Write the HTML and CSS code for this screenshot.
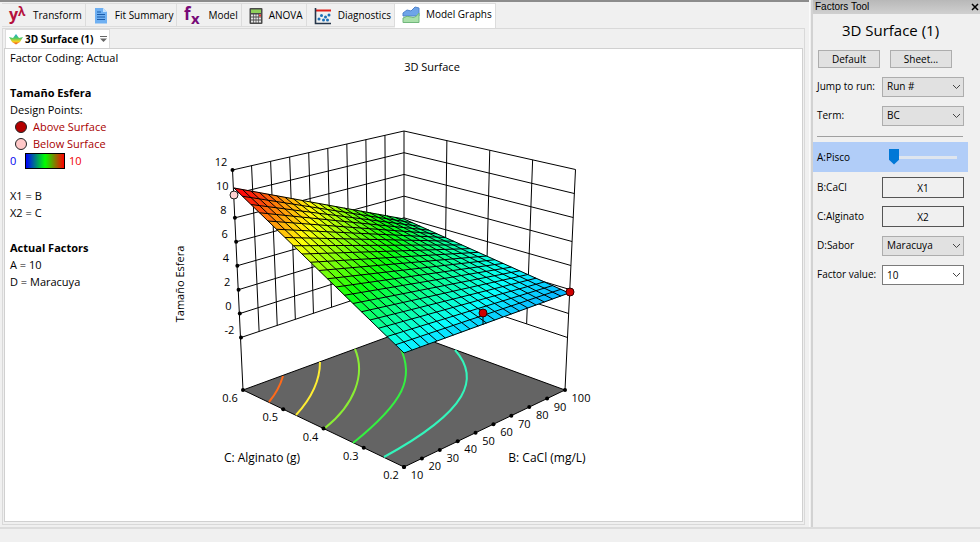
FILE: index.html
```html
<!DOCTYPE html>
<html lang="en">
<head>
    <meta charset="UTF-8">
    <meta name="viewport" content="width=device-width, initial-scale=1.0">
    <title>Model Graphs - 3D Surface</title>
    <link rel="stylesheet" href="styles.css">
</head>
<body>
    <div class="workspace">
        <main class="main">
            <!-- Analysis steps -->
            <nav class="tabs">
                <button type="button" class="tab">
                    <svg class="tab-icon icon-transform" width="18" height="18" viewBox="0 0 18 18" aria-hidden="true">
                        <text x="0" y="13" font-size="16">y</text>
                        <text x="9" y="9" font-size="12">λ</text>
                    </svg>
                    Transform
                </button>
                <button type="button" class="tab">
                    <svg class="tab-icon" width="16" height="18" viewBox="0 0 16 18">
                        <path d="M2 1h8l4 4v11.500H2z" fill="#6fb0f2"/>
                        <path d="M10 1v4h4z" fill="#c4e2ff"/>
                        <path d="M4 5h4M4 7.500h8M4 10h8M4 12.500h8" stroke="#1b5cab" stroke-width="1.200"/>
                    </svg>
                    Fit Summary
                </button>
                <button type="button" class="tab">
                    <svg class="tab-icon icon-model" width="18" height="20" viewBox="0 0 18 20" aria-hidden="true">
                        <text x="0" y="14" font-size="17">f</text>
                        <text x="7" y="18" font-size="15">x</text>
                    </svg>
                    Model
                </button>
                <button type="button" class="tab">
                    <svg class="tab-icon" width="14" height="18" viewBox="0 0 14 18">
                        <rect x=".5" y="1" width="13" height="16" rx="1" fill="#4a4a4a"/>
                        <rect x="2" y="2.500" width="10" height="3.500" fill="#8fd15a"/>
                        <path d="M2 8.500h10M2 11.500h10M2 14.500h10" stroke="#e6e6e6" stroke-width="2" stroke-dasharray="2 .67"/>
                        <rect x="10" y="7.500" width="2" height="2" fill="#e5392e"/>
                    </svg>
                    ANOVA
                </button>
                <button type="button" class="tab">
                    <svg class="tab-icon" width="18" height="18" viewBox="0 0 18 18">
                        <path d="M2 3.500h15" stroke="#e0201b" stroke-width="2"/>
                        <path d="M1.500 1v15.500H17" fill="none" stroke="#26364a" stroke-width="1.600"/>
                        <g fill="#1c70b8">
                            <circle cx="5" cy="12" r="1.500"/><circle cx="7.500" cy="8.500" r="1.500"/>
                            <circle cx="9.500" cy="13" r="1.500"/><circle cx="11.500" cy="10" r="1.500"/>
                            <circle cx="13.500" cy="13" r="1.500"/><circle cx="15" cy="8" r="1.500"/>
                        </g>
                    </svg>
                    Diagnostics
                </button>
                <button type="button" class="tab tab-active">
                    <svg class="tab-icon" width="18" height="18" viewBox="0 0 18 18">
                        <path d="M1 7l4-3 4 1 4-4 4 1v8H1z" fill="#6ea4e8" stroke="#4f83cc"/>
                        <path d="M1 12q4-3 8-1t8-4v9.500H1z" fill="#a9dfa9" stroke="#71b77c"/>
                    </svg>
                    Model Graphs
                </button>
            </nav>

            <div class="view">
                <div class="view-tabs">
                    <button type="button" class="view-tab">
                        <svg width="14" height="12" viewBox="0 0 14 12">
                            <defs>
                                <linearGradient id="bowl" x1="0" y1="0" x2="0" y2="1">
                                    <stop offset="0" stop-color="#1aa9d8"/>
                                    <stop offset=".4" stop-color="#4fca62"/>
                                    <stop offset=".7" stop-color="#f5d31e"/>
                                    <stop offset="1" stop-color="#ef4423"/>
                                </linearGradient>
                            </defs>
                            <path d="M0 4l4 1 3-4 3 4 4-1-3 5-4 2.500L3 9z" fill="url(#bowl)"/>
                        </svg>
                        3D Surface (1)
                        <svg class="view-menu" width="7" height="6" viewBox="0 0 7 6">
                            <path d="M0 .5h7" stroke="#666"/>
                            <path d="M0 2.500h7L3.500 6z" fill="#666"/>
                        </svg>
                    </button>
                </div>

                <section class="graph">
                    <div class="legend">
                        <p>Factor Coding: Actual</p>
                        <h2>Tamaño Esfera</h2>
                        <p>Design Points:</p>
                        <p class="point"><span class="dot dot-above"></span>Above Surface</p>
                        <p class="point"><span class="dot dot-below"></span>Below Surface</p>
                        <p class="scale">
                            <span class="scale-min">0</span>
                            <span class="scale-bar"></span>
                            <span class="scale-max">10</span>
                        </p>
                        <p class="axes-first">X1 = B</p>
                        <p>X2 = C</p>
                        <h2>Actual Factors</h2>
                        <p>A = 10</p>
                        <p>D = Maracuya</p>
                    </div>

                    <svg class="chart" viewBox="160 49 642 472" role="img" aria-label="3D Surface">
                        <g id="walls" class="wall"></g>
                        <path class="floor" d="M404 331L565 390L404 467L243 390z"/>
                        <g class="contours">
                            <path stroke="#ff6a1a" d="M283 376Q279 390 269 402"/>
                            <path stroke="#ffee33" d="M320 362Q320 389 296 415"/>
                            <path stroke="#8aee33" d="M355 349C366 375 354 405 325 428"/>
                            <path stroke="#33f040" d="M400 347C415 378 404 402 353 443"/>
                            <path stroke="#33f5bb" d="M455 350C480 378 470 410 384 457"/>
                        </g>
                        <g id="surface"></g>
                        <g id="mesh" class="wall"></g>
                        <g id="ticks"></g>
                        <path class="stem" d="M483 314v11"/>
                        <circle class="above" cx="483" cy="313" r="4"/>
                        <circle class="above" cx="570" cy="292" r="4"/>
                        <circle class="below" cx="234" cy="195" r="4"/>
                        <g class="labels" id="labels">
                            <text x="432" y="71">3D Surface</text>
                            <text class="floor-title" x="262" y="462">C: Alginato (g)</text>
                            <text class="floor-title" x="547" y="462">B: CaCl (mg/L)</text>
                            <text transform="translate(184 284) rotate(-90)">Tamaño Esfera</text>
                        </g>
                    </svg>
                </section>
            </div>
        </main>

        <!-- Factors Tool -->
        <aside class="tool">
            <header class="tool-bar">
                <span>Factors Tool</span>
                <button type="button" class="close" aria-label="Close">
                    <svg width="8" height="8" viewBox="0 0 8 8"><path d="M1 1l6 6M7 1L1 7" stroke="#000" stroke-width="1.500"/></svg>
                </button>
            </header>
            <h1 class="tool-title">3D Surface (1)</h1>
            <div class="tool-buttons">
                <button type="button">Default</button>
                <button type="button">Sheet...</button>
            </div>
            <div class="row">
                <label for="run">Jump to run:</label>
                <div class="combo">
                    <select id="run"><option>Run #</option></select>
                    <svg class="arrow" width="9" height="6" viewBox="0 0 9 6"><path d="M1 1l3.500 3.500L8 1"/></svg>
                </div>
            </div>
            <div class="row">
                <label for="term">Term:</label>
                <div class="combo">
                    <select id="term"><option>BC</option></select>
                    <svg class="arrow" width="9" height="6" viewBox="0 0 9 6"><path d="M1 1l3.500 3.500L8 1"/></svg>
                </div>
            </div>
            <hr class="divider">
            <div class="row row-selected">
                <label for="pisco">A:Pisco</label>
                <input type="range" id="pisco" class="slider" min="10" max="30" value="10">
            </div>
            <div class="row">
                <label for="cacl">B:CaCl</label>
                <button type="button" id="cacl" class="axis">X1</button>
            </div>
            <div class="row">
                <label for="alginato">C:Alginato</label>
                <button type="button" id="alginato" class="axis">X2</button>
            </div>
            <div class="row">
                <label for="sabor">D:Sabor</label>
                <div class="combo">
                    <select id="sabor"><option>Maracuya</option></select>
                    <svg class="arrow" width="9" height="6" viewBox="0 0 9 6"><path d="M1 1l3.500 3.500L8 1"/></svg>
                </div>
            </div>
            <div class="row">
                <label for="value">Factor value:</label>
                <div class="combo">
                    <input type="text" id="value" value="10">
                    <svg class="arrow" width="9" height="6" viewBox="0 0 9 6"><path d="M1 1l3.500 3.500L8 1"/></svg>
                </div>
            </div>
        </aside>
    </div>
    <footer class="status"></footer>

    <script src="script.js"></script>
</body>
</html>
```
FILE: styles.css
```css
/* Global Styles */
* {
    box-sizing: border-box;
}

body {
    margin: 0;
    min-height: 100vh;
    display: flex;
    flex-direction: column;
    background-color: #f0f0f0;
    color: #000;
    font-family: 'Open Sans', 'Noto Sans', sans-serif;
    font-size: 10px;
    line-height: 17px;
}

button, select, input {
    font: inherit;
    color: inherit;
    margin: 0;
}

h1, h2, p {
    margin: 0;
}

svg {
    display: block;
    flex: none;
}

.workspace {
    flex: 1;
    display: flex;
}

.main {
    flex: 1;
    min-width: 0;
    display: flex;
    flex-direction: column;
    border-top: 2px solid #8c8c8c;
    padding: 1px 4px 2px 2px;
}

/* Analysis tabs */
.tabs {
    display: flex;
    height: 25px;
}

.tab {
    display: flex;
    align-items: center;
    gap: 6px;
    height: 24px;
    padding: 1px 3px 0 7px;
    border: 1px solid #dcdcdc;
    border-left: none;
    background-color: #f0f0f0;
    white-space: nowrap;
}

.tab-icon {
    overflow: visible;
}

.tab-active {
    height: 25px;
    background-color: #fff;
    border-bottom: none;
    padding-top: 0;
    padding-bottom: 3px;
}

.icon-transform {
    fill: #b5103c;
    font-weight: bold;
}

.icon-model {
    fill: #780a78;
    font-weight: bold;
}

.view {
    flex: 1;
    display: flex;
    flex-direction: column;
    border: 1px solid #d9d9d9;
    padding: 0 1px 2px 1px;
}

.view-tabs {
    display: flex;
    height: 19px;
    padding-left: 1px;
}

.view-tab {
    display: flex;
    align-items: center;
    gap: 2px;
    border: 1px solid #dcdcdc;
    border-bottom: none;
    background-color: #fff;
    padding: 0 2px 0 3px;
    font-weight: bold;
    white-space: nowrap;
}

.view-menu {
    margin-left: 5px;
}

.graph {
    flex: 1;
    display: flex;
    background-color: #fff;
    border: 1px solid #d0d0d0;
}

/* Legend */
.legend {
    flex: none;
    width: 155px;
    padding-left: 5px;
    font-size: 11px;
}

.legend h2 {
    margin-top: 18px;
    font-size: 11px;
    line-height: 17px;
}

.point {
    display: flex;
    align-items: center;
    gap: 6px;
    padding-left: 5px;
    color: #a80000;
}

.dot {
    width: 12px;
    height: 12px;
    border: 1px solid #222;
    border-radius: 50%;
}

.dot-above {
    background-color: #b40000;
}

.dot-below {
    background-color: #ffc8c8;
}

.scale {
    display: flex;
    align-items: center;
}

.scale-min {
    width: 15px;
    color: #0000f0;
}

.scale-bar {
    width: 40px;
    height: 16px;
    margin-right: 4px;
    border: 1px solid #000;
    background-image: linear-gradient(to right, #0000ff, #00ff00 50%, #ff0000);
}

.scale-max {
    color: #f00000;
}

.axes-first {
    margin-top: 18px;
}

/* 3D chart */
.chart {
    flex: 1;
    min-width: 0;
    height: auto;
    align-self: flex-start;
}

.wall {
    fill: none;
    stroke: #000;
    stroke-width: 1;
}

.floor {
    fill: #646464;
    stroke: #000;
}

.contours {
    fill: none;
    stroke-width: 2;
}

.stem {
    stroke: #000;
}

.above {
    fill: #d00000;
    stroke: #300;
}

.below {
    fill: #ffd0d0;
    stroke: #222;
}

.labels {
    font-size: 11px;
    text-anchor: middle;
}

.floor-title {
    font-size: 12px;
}

/* Factors Tool */
.tool {
    flex: none;
    width: 171px;
    border-left: 1px solid #fafafa;
    box-shadow: inset 1px 0 #f0f0f0, inset 3px 0 #d2d2d2;
    padding-left: 3px;
}

.tool-bar {
    display: flex;
    justify-content: space-between;
    align-items: center;
    height: 14px;
    padding: 0 1px 1px 2px;
    background-image: linear-gradient(#b8b8b8, #d0d0d0);
    font-family: 'Liberation Sans', Arial, sans-serif;
    line-height: 12px;
}

.close {
    display: flex;
    border: none;
    padding: 0;
    background: none;
}

.tool-title {
    margin-top: 4px;
    padding-right: 12px;
    text-align: center;
    font-size: 15px;
    font-weight: normal;
    line-height: 24px;
}

.tool-buttons {
    display: flex;
    gap: 10px;
    padding: 8px 4px 4px 5px;
}

.tool-buttons button {
    width: 62px;
    height: 18px;
    padding: 0;
    border: 1px solid #adadad;
    background-color: #e1e1e1;
    line-height: 16px;
}

.row {
    display: flex;
    align-items: center;
    height: 29px;
    margin-right: 12px;
    padding: 0 4px;
}

.row label {
    flex: none;
    width: 65px;
    white-space: nowrap;
}

.combo {
    position: relative;
    width: 82px;
    height: 20px;
}

.combo select,
.combo input {
    appearance: none;
    display: block;
    width: 100%;
    height: 20px;
    padding: 0 4px;
    border: 1px solid #adadad;
    border-radius: 0;
    background-color: #e1e1e1;
}

.combo input {
    border-color: #7a7a7a;
    background-color: #fff;
}

.arrow {
    position: absolute;
    right: 3px;
    top: 7px;
    fill: none;
    stroke: #444;
    pointer-events: none;
}

.divider {
    margin: 6px 17px 5px 4px;
    border: none;
    border-top: 1px solid #a0a0a0;
}

.row-selected {
    height: 30px;
    margin-bottom: 1px;
    background-color: #b1cdf8;
}

.slider {
    appearance: none;
    width: 68px;
    height: 16px;
    margin-left: 7px;
    background: none;
}

.slider::-webkit-slider-runnable-track {
    height: 3px;
    background-color: #dfe5ee;
}

.slider::-webkit-slider-thumb {
    appearance: none;
    width: 10px;
    height: 16px;
    margin-top: -7px;
    background-color: #0078d7;
    clip-path: polygon(0 0, 100% 0, 100% 70%, 50% 100%, 0 70%);
}

.axis {
    width: 82px;
    height: 21px;
    padding: 0;
    border: 1px solid #555;
    background-color: #f0f0f0;
    line-height: 18px;
}

.status {
    height: 15px;
    border-top: 2px solid #dcdcdc;
}
```
FILE: script.js
```js
const SVG = 'http://www.w3.org/2000/svg';

// Corners of the walls: top edge (12) and bottom edge (-2)
const top12 = { left: [232.5, 170], back: [404, 131], right: [575.5, 169.5] };
const low = { left: [241, 337.5], back: [404, 283], right: [567.5, 337.5] };

// Corners of the fitted surface: position and response
const corners = {
    left: [234, 188, 10.5],
    back: [404, 219, 3.9],
    right: [569, 293, 1.7],
    front: [404, 353, 2.2]
};

function mix(a, b, t) {
    return a.map((n, i) => n + (b[i] - n) * t);
}

function add(parent, name, attrs, text) {
    const el = document.createElementNS(SVG, name);
    for (const key in attrs) el.setAttribute(key, attrs[key]);
    if (text !== undefined) el.textContent = text;
    parent.appendChild(el);
}

function line(parent, a, b) {
    add(parent, 'path', { d: `M${a[0]} ${a[1]}L${b[0]} ${b[1]}` });
}

function drawWalls() {
    const walls = document.getElementById('walls');
    for (let i = 0; i <= 7; i++) {
        const back = mix(top12.back, low.back, i / 7);
        line(walls, mix(top12.left, low.left, i / 7), back);
        line(walls, back, mix(top12.right, low.right, i / 7));
    }
    for (let i = 1; i <= 9; i++) {
        line(walls, mix(top12.left, top12.back, i / 9), mix(low.left, low.back, i / 9));
    }
    for (let i = 1; i < 4; i++) {
        line(walls, mix(top12.back, top12.right, i / 4), mix(low.back, low.right, i / 4));
    }
    line(walls, top12.left, [243, 390]);
    line(walls, top12.right, [565, 390]);
}

function surfacePoint(b, c) {
    return mix(mix(corners.front, corners.right, b), mix(corners.left, corners.back, b), c);
}

function drawSurface() {
    const surface = document.getElementById('surface');
    const mesh = document.getElementById('mesh');
    const n = 20;
    for (let i = n - 1; i >= 0; i--) {
        for (let j = n - 1; j >= 0; j--) {
            const quad = [[i, j], [i + 1, j], [i + 1, j + 1], [i, j + 1]]
                .map(([b, c]) => surfacePoint(b / n, c / n).slice(0, 2).join(','));
            const value = surfacePoint((i + 0.5) / n, (j + 0.5) / n)[2];
            const hue = Math.max(0, 240 - 24 * value);
            const fill = `hsl(${hue}, 100%, 52%)`;
            add(surface, 'polygon', { points: quad.join(' '), fill: fill, stroke: fill, 'stroke-width': 0.5 });
        }
    }
    for (let i = 0; i <= n; i++) {
        line(mesh, surfacePoint(i / n, 0), surfacePoint(i / n, 1));
        line(mesh, surfacePoint(0, i / n), surfacePoint(1, i / n));
    }
}

function drawAxes() {
    const ticks = document.getElementById('ticks');
    const labels = document.getElementById('labels');
    const mark = (p) => add(ticks, 'circle', { cx: p[0], cy: p[1], r: 2 });

    ['12', '10', '8', '6', '4', '2', '0', '-2'].forEach((text, i) => {
        const p = mix(top12.left, low.left, i / 7);
        if (i !== 1) mark(p);
        add(labels, 'text', { x: p[0] - 11.5, y: p[1] - 4 }, text);
    });
    ['0.2', '0.3', '0.4', '0.5', '0.6'].forEach((text, i) => {
        const p = mix([404, 467], [243, 390], i / 4);
        mark(p);
        add(labels, 'text', { x: p[0] - 13, y: p[1] + 12 }, text);
    });
    for (let i = 0; i <= 9; i++) {
        const p = mix([404, 467], [565, 390], i / 9);
        mark(p);
        add(labels, 'text', { x: p[0] + (i === 9 ? 16 : 13), y: p[1] + 12 }, (i + 1) * 10);
    }
}

drawWalls();
drawSurface();
drawAxes();
```
